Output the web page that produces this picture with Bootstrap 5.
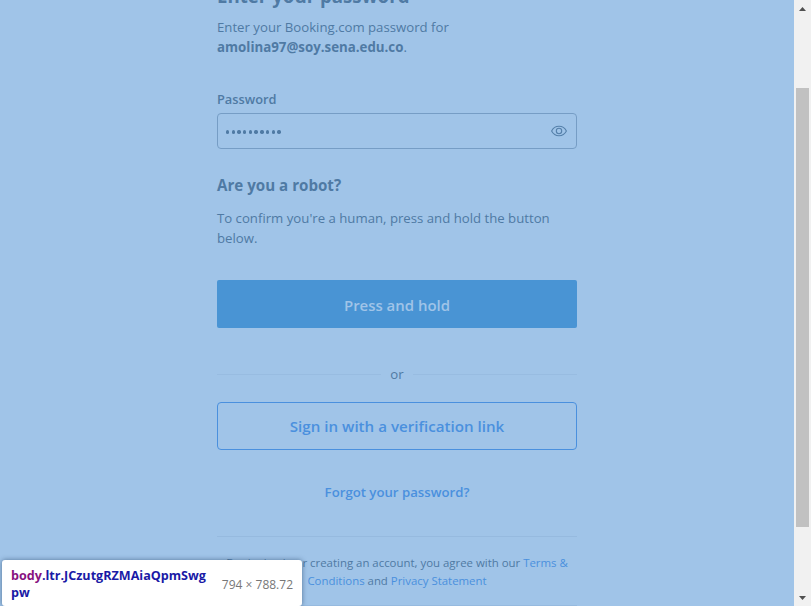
<!DOCTYPE html>
<html lang="en">
<head>
<meta charset="utf-8">
<meta name="viewport" content="width=device-width, initial-scale=1">
<title>Sign in</title>
<link rel="stylesheet" href="https://cdn.jsdelivr.net/npm/bootstrap@5.3.0/dist/css/bootstrap.min.css">
<style>
body{font-family:"Open Sans","Noto Sans",sans-serif;background:#a0c4e8;color:#4f7aa4;font-size:13.2px;line-height:20px}
.page{height:606px}
.signin{width:360px;margin-top:-16px}
.signin a{color:#4a90de}
.title{font-size:18.68px;line-height:24px;margin-bottom:9px}
.email{font-size:13.3px}
.mail-row{margin-bottom:32px}
.field-label{font-size:12.8px;font-weight:600;margin-bottom:4px}
.pw-field{height:36px;border:1px solid #769dc5;border-radius:4px;padding:2px 9px 0 8px;margin-bottom:24px}
.pw-dots span{width:3.4px;height:3.4px;border-radius:50%;background:#4f7aa4}
.pw-dots{gap:2.3px}
.eye{margin-top:-2px}
.robot-title{font-size:15.15px;line-height:24px;margin-bottom:11px}
.robot-text{margin-bottom:32px}
.signin .hold-btn{height:48px;background:#4994d4;color:#a0c4e8;border:0;border-radius:2px;font-size:14.95px;padding:1px 0 0;line-height:24px;margin-bottom:36px}
.divider{gap:9px;margin-bottom:18px}
.rule{height:1px;background:#96badf}
.divider .rule{background:#98bce1}
.signin .link-btn{height:48px;border:1px solid #4a90de;border-radius:4px;font-size:15.15px;line-height:24px;margin-bottom:32px}
.forgot{font-size:13.2px;margin-bottom:34px}
.terms{font-size:11.41px;line-height:18px;margin:17px 0 15px}
.scroll-strip{width:17px;background:#f1f1f1}
.thumb{width:13px;height:439px;background:#c1c1c1}
.strip-top{height:88px;padding-top:7px}
.strip-bottom{height:79px;padding-bottom:6px}
.inspect-tip{left:2px;top:560px;width:300px;height:46px;border-radius:3px;background:#fff;padding:7px 9px 0;box-shadow:0 0 5px rgba(30,60,95,.6);line-height:17px}
.sel{width:198px;font-size:12.58px;color:#1a1aa6}
.sel .tag{color:#881280}
.dims{font-size:12px;color:#777;padding-top:9px}
</style>
</head>
<body class="overflow-hidden">
<div class="page d-flex overflow-hidden position-relative">
  <div class="flex-grow-1 d-flex justify-content-center align-items-start">
    <main class="signin">
      <h1 class="title fw-bold text-nowrap">Enter your password</h1>
      <div class="text-nowrap">Enter your Booking.com password for</div>
      <div class="mail-row"><span class="email fw-bold">amolina97@soy.sena.edu.co</span>.</div>
      <div class="field-label">Password</div>
      <div class="pw-field d-flex align-items-center justify-content-between">
        <div class="pw-dots d-flex"><span></span><span></span><span></span><span></span><span></span><span></span><span></span><span></span><span></span><span></span></div>
        <svg class="eye" width="16" height="12" viewBox="0 0 16 12" fill="none" stroke="#5580aa" stroke-width="1.1"><path d="M.6 6C2.2 2.9 4.8 1.3 8 1.3s5.800 1.600 7.400 4.700C13.800 9.100 11.200 10.700 8 10.700S2.200 9.100.6 6Z"/><circle cx="8" cy="6" r="2.700"/></svg>
      </div>
      <h2 class="robot-title fw-bold">Are you a robot?</h2>
      <div class="robot-text"><span class="text-nowrap">To confirm you're a human, press and hold the button</span><br>below.</div>
      <button class="hold-btn btn w-100 fw-semibold d-flex align-items-center justify-content-center">Press and hold</button>
      <div class="divider d-flex align-items-center"><div class="rule flex-grow-1"></div><span>or</span><div class="rule flex-grow-1"></div></div>
      <a href="#" class="link-btn w-100 fw-semibold text-decoration-none d-flex align-items-center justify-content-center">Sign in with a verification link</a>
      <div class="forgot text-center"><a href="#" class="fw-semibold text-decoration-none">Forgot your password?</a></div>
      <div class="rule"></div>
      <div class="terms text-center text-nowrap">By signing in or creating an account, you agree with our <a href="#" class="text-decoration-none">Terms &amp;<br>Conditions</a> and <a href="#" class="text-decoration-none">Privacy Statement</a></div>
      <div class="rule"></div>
    </main>
  </div>
  <div class="scroll-strip d-flex flex-column align-items-center">
    <div class="strip-top"><svg class="d-block" width="7" height="4" viewBox="0 0 7 4" fill="#505050"><path d="M0 4 3.500 0 7 4Z"/></svg></div>
    <div class="thumb"></div>
    <div class="strip-bottom d-flex align-items-end"><svg class="d-block" width="7" height="4" viewBox="0 0 7 4" fill="#505050"><path d="M0 0H7L3.500 4Z"/></svg></div>
  </div>
  <div class="inspect-tip position-absolute d-flex justify-content-between">
    <div class="sel fw-bold text-nowrap"><span class="tag">body</span>.ltr.JCzutgRZMAiaQpmSwg<br>pw</div>
    <div class="dims text-nowrap">794 × 788.72</div>
  </div>
</div>
<script src="https://cdn.jsdelivr.net/npm/bootstrap@5.3.0/dist/js/bootstrap.bundle.min.js"></script>
</body>
</html>
